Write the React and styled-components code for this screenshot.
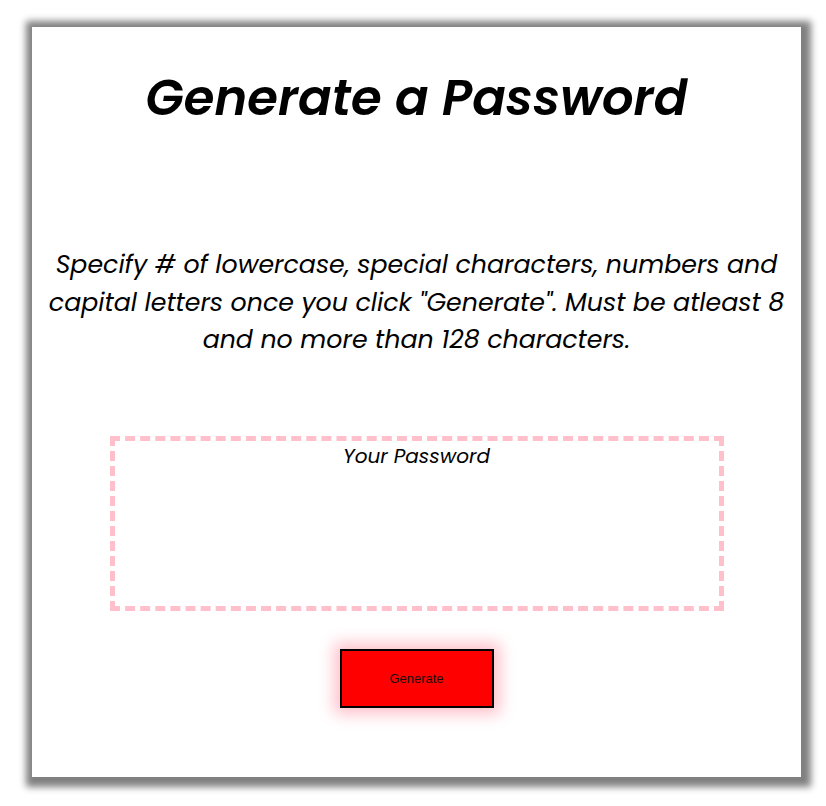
import React from 'react'
import styled, { createGlobalStyle } from 'styled-components'

const GlobalStyle = createGlobalStyle`
  html, body {
    margin: 0;
    padding: 0;
    background: #fff;
  }
  body {
    font-family: Poppins, "DejaVu Sans", sans-serif;
  }
`

const Page = styled.div`
  padding: 27px 0 0 32px;
  min-height: 806px;
  box-sizing: border-box;
`

const Card = styled.main`
  width: 769px;
  height: 750px;
  background: #fff;
  box-shadow: 2px 2px 7px 8px #808080;
  display: flex;
  flex-direction: column;
  align-items: center;
  box-sizing: border-box;
`

const Title = styled.h1`
  margin: 42px 0 0;
  font-family: Poppins, "DejaVu Sans", sans-serif;
  font-style: italic;
  font-weight: 600;
  font-size: 49.7px;
  line-height: 58px;
  color: #000;
`

const Hint = styled.p`
  margin: 119px 0 0;
  width: 760px;
  text-align: center;
  font-family: Poppins, "DejaVu Sans", sans-serif;
  font-style: italic;
  font-size: 25.25px;
  line-height: 37.5px;
  color: #000;
`

const Output = styled.textarea`
  margin-top: 77px;
  width: 614px;
  height: 175px;
  box-sizing: border-box;
  border: 5px dashed #ffc0cb;
  outline: none;
  resize: none;
  padding: 1px 10px;
  text-align: center;
  font-family: Poppins, "DejaVu Sans", sans-serif;
  font-style: italic;
  font-size: 20px;
  line-height: 28px;
  color: #000;
  background: #fff;

  &::placeholder {
    color: #000;
    opacity: 1;
  }
`

const GenerateButton = styled.button`
  margin-top: 38px;
  width: 154px;
  height: 59px;
  background: #ff0000;
  border: 2px solid #000;
  box-shadow: 0 0 15px 6px #ffc0cb;
  font-family: "Liberation Sans", Arial, sans-serif;
  font-size: 13px;
  color: #111;
  cursor: pointer;
`

const App = () => (
  <Page>
    <GlobalStyle />
    <Card>
      <Title>Generate a Password</Title>
      <Hint>
        Specify # of lowercase, special characters, numbers and capital letters once you click "Generate". Must be atleast 8 and no more than 128 characters.
      </Hint>
      <Output readOnly placeholder="Your Password" aria-label="Generated password" />
      <GenerateButton type="button">Generate</GenerateButton>
    </Card>
  </Page>
)

export default App
